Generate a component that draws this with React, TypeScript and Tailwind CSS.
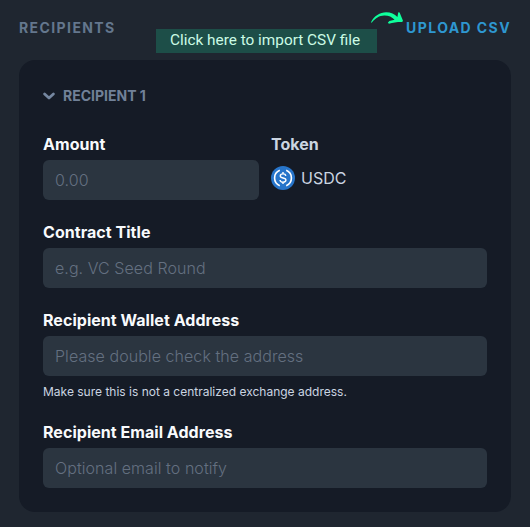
import React from "react";

function Field({ label, placeholder, hint }: { label: string; placeholder: string; hint?: string }) {
  return (
    <div className="flex flex-col">
      <label className="mb-1 h-6 text-base leading-6 font-bold tracking-[0.04px] text-[#f8fafc]">{label}</label>
      <input
        className="h-10 w-full rounded-md bg-[#2b3540] px-3 text-base font-light tracking-[0.06px] text-slate-300 outline-none placeholder:text-[#647080] placeholder:opacity-100"
        placeholder={placeholder}
      />
      {hint && <p className="mt-2 text-xs leading-4 text-[#cbd5e1]">{hint}</p>}
    </div>
  );
}

function UsdcIcon() {
  return (
    <svg className="size-6" viewBox="0 0 24 24" fill="none">
      <circle cx="12" cy="12" r="12" fill="#2775ca" />
      <g stroke="#fff" strokeWidth="1.6">
        <path d="M8.800 4.300a8.300 8.300 0 0 0 0 15.400M15.200 4.300a8.300 8.300 0 0 1 0 15.400" />
        <path d="M14.800 9.800c-.2-1.200-1.200-1.900-2.800-1.900s-2.700.8-2.700 2c0 3 5.600 1.300 5.600 4.200 0 1.300-1.200 2.100-2.900 2.100s-2.800-.8-3-2.200M12 5.900v2M12 16.100v2" strokeWidth="1.400" />
      </g>
    </svg>
  );
}

function ChevronIcon() {
  return (
    <svg className="h-3 w-3" viewBox="0 0 12 12" fill="none">
      <path d="M1.600 3.900 6 8 10.400 3.900" stroke="#7587a0" strokeWidth="2.7" strokeLinecap="round" strokeLinejoin="round" />
    </svg>
  );
}

function ArrowIcon() {
  return (
    <svg className="absolute top-3 left-[371px] h-3 w-8" viewBox="0 0 32 12">
      <path
        fill="#0fff9c"
        d="M0 10.200C3 4 9 .2 15.200.2c4.600 0 8.500 1.800 11.200 4.700L27.300.2l1.300.2L32 8.800l-.8 1.300c-4.400-.1-9.200.4-13.200 1.700l-1.200-1 1.500-1.700 5.300-1.400C21 5 17.800 3.600 13.500 3.500 8.500 3.400 4.300 6.200.7 10.700z"
      />
    </svg>
  );
}

export default function App() {
  return (
    <main className="relative flex h-[527px] w-[530px] flex-col bg-[#1f2630] px-[19px] font-['Inter',sans-serif]">
      <header className="flex h-[60px] items-start justify-between pt-[18px] text-sm leading-5 font-bold">
        <h1 className="tracking-[1.4px] text-[#64778d]">RECIPIENTS</h1>
        <button className="text-sm leading-5 font-bold tracking-[1.4px] text-[#2e97d0]">UPLOAD CSV</button>
      </header>
      <div className="absolute top-[29px] left-[156px] h-6 w-[221px] bg-[#1d4e48] pl-[14px] font-['Roboto',sans-serif] text-[15.35px] leading-[23px] whitespace-nowrap text-[#cbfbe5]">
        Click here to import CSV file
      </div>
      <ArrowIcon />
      <section className="flex h-[452px] flex-col rounded-2xl bg-[#151b26] p-6">
        <h2 className="mb-6 flex h-6 items-center gap-2 text-sm font-bold text-[#718198]">
          <ChevronIcon />
          RECIPIENT 1
        </h2>
        <div className="flex flex-col gap-5">
          <div className="grid grid-cols-2 gap-3">
            <Field label="Amount" placeholder="0.00" />
            <div>
              <div className="h-6 text-base leading-6 font-bold text-[#cbd5e1]">Token</div>
              <div className="mt-[10px] flex items-center gap-1.5 text-base text-[#cbd5e1]">
                <UsdcIcon />
                USDC
              </div>
            </div>
          </div>
          <Field label="Contract Title" placeholder="e.g. VC Seed Round" />
          <Field
            label="Recipient Wallet Address"
            placeholder="Please double check the address"
            hint="Make sure this is not a centralized exchange address."
          />
          <Field label="Recipient Email Address" placeholder="Optional email to notify" />
        </div>
      </section>
    </main>
  );
}
